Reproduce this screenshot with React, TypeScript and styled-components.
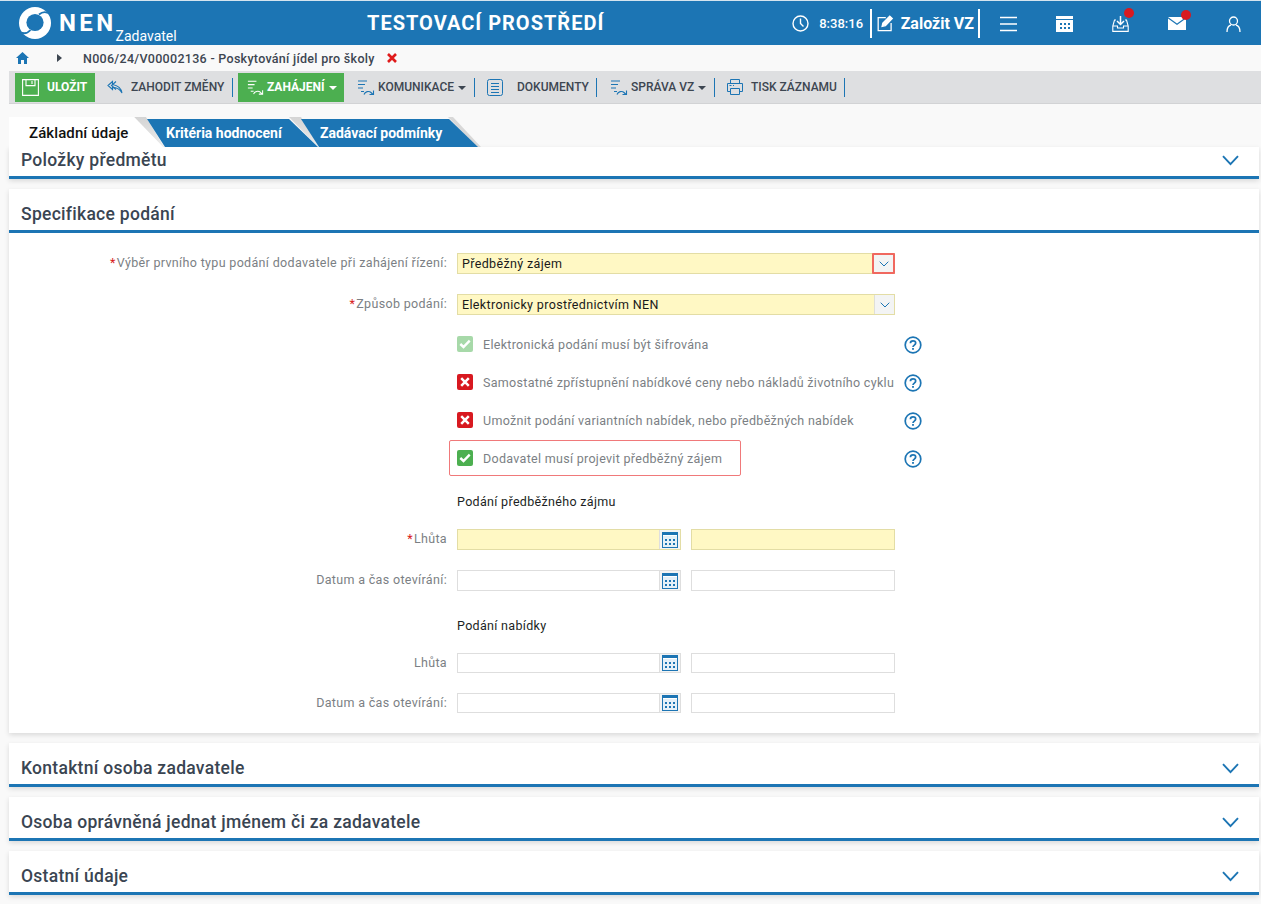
import React from 'react';
import styled, { createGlobalStyle } from 'styled-components';

const Global = createGlobalStyle`
  html, body { margin: 0; padding: 0; background: #f9f9f9; font-family: Roboto, "Liberation Sans", sans-serif; overflow: hidden; }
  * { box-sizing: border-box; }
`;
const Page = styled.div`width: 1261px; height: 904px; overflow: hidden; background: #f9f9f9;`;
const Header = styled.header`
  height: 45px; background: #1c75b4; border-top: 1px solid #d5e4ef; display: flex; align-items: center; color: #fff; position: relative;
`;
const Logo = styled.div`display: flex; align-items: center; width: 340px; padding-left: 18px; height: 44px;`;
const LogoName = styled.span`font-size: 24px; font-weight: 700; letter-spacing: 3.4px; margin-left: 7px; line-height: 1; margin-top: -1px;`;
const LogoSub = styled.span`font-size: 14px; margin-left: -1px; margin-top: 26px;`;
const Title = styled.div`width: 292px; padding-left: 2px; text-align: center; font-size: 20px; font-weight: 700; letter-spacing: 1px;`;
const Clock = styled.div`display: flex; align-items: center; gap: 10px; margin-left: 162px; font-size: 13px; font-weight: 500; width: 77px;`;
const NewButton = styled.div`
  display: flex; align-items: center; gap: 7px; height: 29px; border-left: 2px solid #fff; border-right: 2px solid #fff; margin-left: 1px; padding: 0 4px 0 5px;
  font-size: 16px; font-weight: 700; width: 110px; white-space: nowrap;
`;
const HeaderIcons = styled.div`display: flex; align-items: center; margin-top: 1px;`;
const HeaderIcon = styled.div<{ $w: number }>`width: ${p => p.$w}px; display: flex; justify-content: center; position: relative;`;
const Dot = styled.span`position: absolute; top: -7px; left: 50%; margin-left: 4px; width: 10px; height: 10px; border-radius: 50%; background: #d81920;`;

const Crumbs = styled.div`height: 26px; display: flex; align-items: center; padding-left: 16px; font-size: 12.5px; font-weight: 500; color: #3d4651; letter-spacing: 0.29px;`;
const CrumbArrow = styled.span`margin-left: 28px; margin-right: 21px; width: 0; height: 0; border-left: 5px solid #3d4651; border-top: 4px solid transparent; border-bottom: 4px solid transparent;`;
const CrumbClose = styled.span`margin-left: 12px; display: flex;`;

const Toolbar = styled.div`margin-left: 9px; height: 33px; background: #dedfe1; border-bottom: 1px solid #d2d3d5; display: flex; align-items: center; padding-left: 6px;`;
const Tool = styled.div<{ $green?: boolean; $w: number }>`
  width: ${p => p.$w}px; height: 29px; display: flex; align-items: center; font-size: 12px; flex: none; white-space: nowrap;
  color: ${p => p.$green ? '#fff' : '#3d4651'}; background: ${p => p.$green ? '#4caf50' : 'transparent'};
  font-weight: ${p => p.$green ? 700 : 500};
`;
const ToolGreen = styled(Tool)`margin-left: 5px;`;
const ToolSep = styled.div`width: 1px; height: 19px; flex: none; background: #1c75b4;`;
const ToolIcon = styled.span<{ $l: number; $g: number }>`display: flex; margin-left: ${p => p.$l}px; margin-right: ${p => p.$g}px;`;
const Caret = styled.span`margin-left: 4px; margin-top: 1px; width: 0; height: 0; border-top: 4px solid currentColor; border-left: 4px solid transparent; border-right: 4px solid transparent;`;

const Tabs = styled.div`display: flex; margin: 13px 0 0 9px; height: 30px; align-items: flex-end; position: relative;`;
const ActiveTab = styled.div`
  width: 154px; height: 30px; flex: none; background: #fff; color: #111; font-size: 15px; font-weight: 500; padding: 7px 0 0 20px; letter-spacing: 0.1px;
  clip-path: polygon(0 0, 125px 0, 100% 100%, 0 100%); position: relative; z-index: 2;
`;
const Wedge = styled.div<{ $l: number }>`
  position: absolute; left: ${p => p.$l}px; top: 0; width: 32px; height: 30px; z-index: 1;
  background: linear-gradient(to bottom, #d4d4d4, #ececec);
  clip-path: polygon(0 0, 12px 0, 30px 100%, 29px 100%);
`;
const EndShade = styled.div`
  position: absolute; left: 439px; top: 0; width: 34px; height: 30px; z-index: 1;
  background: #d8d8d8;
  clip-path: polygon(0 0, 5px 0, 33px 100%, 29px 100%);
`;
const Tab = styled.div<{ $w: number; $ml: number; $top: number; $bottom: number }>`
  width: ${p => p.$w}px; height: 28px; background: #1c75b4; color: #fff; font-size: 14px; font-weight: 700; flex: none; position: relative; z-index: 3;
  display: flex; align-items: center; padding-left: 19px; margin-left: ${p => p.$ml}px;
  clip-path: polygon(0 0, ${p => p.$top}px 0, ${p => p.$bottom}px 100%, 18px 100%);
`;
const Stack = styled.main`margin: 0 2px 0 9px; display: flex; flex-direction: column; gap: 10px;`;
const Panel = styled.section`background: #fff; box-shadow: 0 2px 5px rgba(0,0,0,.13);`;
const PanelHead = styled.div<{ $h: number }>`
  height: ${p => p.$h}px; border-bottom: 3px solid #1c75b4; display: flex; align-items: flex-end; justify-content: space-between; padding: 0 20px 4px 12px;
  font-size: 17.5px; font-weight: 500; color: #3a4552; letter-spacing: 0.28px; line-height: 24px;
`;
const Chevron = styled.svg`display: block; margin-bottom: 6px;`;
const Form = styled.div`height: 500px; padding-top: 20px;`;
const Row = styled.div<{ $h: number }>`display: flex; height: ${p => p.$h}px; align-items: flex-start;`;
const Label = styled.div`
  width: 448px; text-align: right; padding: 1px 10px 0 0; font-size: 12.5px; color: #7b7f84; letter-spacing: 0.33px; line-height: 17px; white-space: nowrap;
`;
const Star = styled.span`color: #d81920; margin-right: 1px;`;
const Select = styled.div`
  width: 438px; height: 21px; background: #fff8c4; border: 1px solid #e3dda5; display: flex; font-size: 12.5px; color: #1a1a1a; letter-spacing: 0.35px; position: relative;
`;
const SelectText = styled.div`flex: 1; padding: 1px 4px; line-height: 17px;`;
const SelectBtn = styled.div`width: 20px; background: #f3f4f4; border-left: 1px solid #dfdfd8; display: flex; align-items: center; justify-content: center;`;
const SelectBtnFlagged = styled(SelectBtn)`border: 2px solid #f0685f; border-radius: 1px; width: 23px; height: 21px; margin: -1px -1px -1px 0;`;
const Checks = styled.div`padding-left: 439px; display: flex; flex-direction: column;`;
const CheckRow = styled.div`height: 38px; display: flex; align-items: center; position: relative;`;
const Box = styled.span<{ $c: string }>`
  width: 16px; height: 16px; border-radius: 2px; background: ${p => p.$c}; display: flex; align-items: center; justify-content: center; margin-left: 9px; flex: none;
`;
const CheckText = styled.span`margin-left: 10px; width: 421px; white-space: nowrap; font-size: 12.5px; color: #7b7f84; letter-spacing: 0.3px;`;
const Help = styled.span`display: flex; flex: none; margin-top: 1px;`;
const Outline = styled.div`
  position: absolute; left: 1px; top: 1px; width: 292px; height: 36px; border: 1.5px solid #f0797a; border-radius: 2px; pointer-events: none;
`;
const SubHeading = styled.div<{ $top: number; $h: number }>`
  margin-top: ${p => p.$top}px; height: ${p => p.$h}px; padding-left: 448px; font-size: 12.5px; color: #1c1f24; letter-spacing: 0.32px; line-height: 17px;
`;
const DateBox = styled.div<{ $req?: boolean; $h?: number }>`
  width: 224px; height: ${p => p.$h ?? 21}px; display: flex; border: 1px solid ${p => p.$req ? '#e3dda5' : '#dedede'}; background: ${p => p.$req ? '#fff8c4' : '#fff'};
`;
const DateFill = styled.div`flex: 1;`;
const DateBtn = styled.div`width: 21px; background: #f3f4f4; border-left: 1px solid #dedede; display: flex; align-items: center; justify-content: center;`;
const TimeBox = styled.div<{ $req?: boolean; $h?: number }>`
  width: 204px; height: ${p => p.$h ?? 21}px; margin-left: 10px; border: 1px solid ${p => p.$req ? '#e3dda5' : '#dedede'}; background: ${p => p.$req ? '#fff8c4' : '#fff'};
`;

const B = '#1c75b4';
const Lines = () => (
  <svg width="20" height="20" viewBox="0 0 20 20" fill="none" stroke={B} strokeWidth="1.1">
    <path d="M2 4h9M2 7.5h7M2 11h5M5 14.5h3" />
    <path d="M8 17.5c1-3 5-4 7-2l2 2M17.5 13.5v4h-4" />
  </svg>
);
const LinesW = () => (
  <svg width="19" height="20" viewBox="0 0 20 20" fill="none" stroke="#fff" strokeWidth="1.1">
    <path d="M2 4h9M2 7.5h7M2 11h5M5 14.5h3" />
    <path d="M8 17.5c1-3 5-4 7-2l2 2M17.5 13.5v4h-4" />
  </svg>
);
const Question = () => (
  <svg width="18" height="18" viewBox="0 0 18 18" fill="none">
    <circle cx="9" cy="9" r="7.8" stroke={B} strokeWidth="1.7" />
    <path d="M6.4 7.2c0-1.5 1.2-2.4 2.6-2.4s2.7.9 2.7 2.3c0 2-2.7 2-2.7 3.9" stroke={B} strokeWidth="1.7" />
    <rect x="8.1" y="12" width="1.8" height="1.8" fill={B} />
  </svg>
);
const Tick = () => (
  <svg width="12" height="10" viewBox="0 0 12 10" fill="none"><path d="M1.3 5l3.2 3L10.7 1.6" stroke="#fff" strokeWidth="2.4" /></svg>
);
const Cross = () => (
  <svg width="10" height="10" viewBox="0 0 10 10" fill="none"><path d="M1.2 1.2l7.6 7.6M8.8 1.2L1.2 8.8" stroke="#fff" strokeWidth="2.5" /></svg>
);
const Cal = () => (
  <svg width="16" height="16" viewBox="0 0 16 16" fill="none">
    <rect x=".5" y=".5" width="15" height="15" fill="#e4f0f8" stroke={B} />
    <rect x="0" y="1" width="16" height="2" fill={B} />
    <rect x="1" y="3" width="14" height="1" fill="#fff" />
    <path d="M3 7h2v2H3zM7 7h2v2H7zM11 7h2v2h-2zM3 11h2v2H3zM7 11h2v2H7zM11 11h2v2h-2z" fill={B} />
  </svg>
);
const SmallChev = () => (
  <svg width="10" height="6" viewBox="0 0 10 6" fill="none"><path d="M.7.7L5 5l4.3-4.3" stroke={B} strokeWidth="1" /></svg>
);
const BigChev = () => (
  <Chevron width="17" height="11" viewBox="0 0 17 11" fill="none"><path d="M1 1.2l7.5 8 7.5-8" stroke={B} strokeWidth="1.9" /></Chevron>
);

const Req = ({ children }: { children: React.ReactNode }) => <Label><Star>*</Star>{children}</Label>;

export default function App() {
  return (
    <Page>
      <Global />
      <Header>
        <Logo>
          <svg width="34" height="34" viewBox="0 0 34 34" fill="none">
            <circle cx="17" cy="17" r="16" fill="#fff" />
            <circle cx="17" cy="16.5" r="8.6" fill="#1c75b4" />
            <path d="M21 8.5C24.500 5.500 29 5 34 9.500" stroke="#1c75b4" strokeWidth="1.8" />
            <path d="M12.500 24C9 28 5 28.500 0 25" stroke="#1c75b4" strokeWidth="1.8" />
          </svg>
          <LogoName>NEN</LogoName>
          <LogoSub>Zadavatel</LogoSub>
        </Logo>
        <Title>TESTOVACÍ PROSTŘEDÍ</Title>
        <Clock>
          <svg width="17" height="17" viewBox="0 0 17 17" fill="none" stroke="#fff" strokeWidth="1.4"><circle cx="8.5" cy="8.5" r="7.5" /><path d="M8.5 3.5v5l3 3" /></svg>
          <span>8:38:16</span>
        </Clock>
        <NewButton>
          <svg width="17" height="17" viewBox="0 0 17 17" fill="none" stroke="#fff" strokeWidth="1.3"><path d="M9 2.6H1.2v13.2h13.2V8" /><path d="M6 8l-.8 3.4 3.4-.8 7-7.2-2.6-2.5z" fill="#fff" /></svg>
          Založit VZ
        </NewButton>
        <HeaderIcons>
          <HeaderIcon $w={56}><svg width="17" height="16" viewBox="0 0 17 16" stroke="#fff" strokeWidth="1.5"><path d="M0 1.5h17M0 8h17M0 14.5h17" /></svg></HeaderIcon>
          <HeaderIcon $w={56}><svg width="17" height="16" viewBox="0 0 17 16"><path d="M0 0h17v3H0zM0 4h17v12H0z" fill="#fff" /><path d="M4 7h2v2H4zM8 7h2v2H8zM12 7h2v2h-2zM4 11h2v2H4zM8 11h2v2H8zM12 11h2v2h-2z" fill="#1c75b4" /></svg></HeaderIcon>
          <HeaderIcon $w={56}><svg width="17" height="17" viewBox="0 0 17 17" fill="none" stroke="#fff" strokeWidth="1.1"><path d="M4 5H2.5L.8 11v5.4h15.400V11l-1.700-6H13M.8 11h4.700v2h6v-2h4.700" /><path d="M8.500 1v8M5 6l3.500 3.500L12 6" strokeWidth="1.5" /></svg><Dot /></HeaderIcon>
          <HeaderIcon $w={58}><svg width="18" height="13" viewBox="0 0 18 13"><path d="M0 0h18L9 6.5z" fill="#fff" /><path d="M0 1.5l9 6.5 9-6.5V13H0z" fill="#fff" /></svg><Dot /></HeaderIcon>
          <HeaderIcon $w={55}><svg width="15" height="16" viewBox="0 0 15 16" fill="none" stroke="#fff" strokeWidth="1.3"><circle cx="7.5" cy="5" r="4" /><path d="M1 16c0-4 2-6.5 4-7M14 16c0-4-2-6.5-4-7" /></svg></HeaderIcon>
        </HeaderIcons>
      </Header>
      <Crumbs>
        <svg width="13" height="12" viewBox="0 0 13 12"><path d="M6.5 0L13 6h-2v6H8V8H5v4H2V6H0z" fill={B} /></svg>
        <CrumbArrow />
        N006/24/V00002136 - Poskytování jídel pro školy
        <CrumbClose><svg width="10" height="10" viewBox="0 0 10 10"><path d="M1 1l8 8M9 1l-8 8" stroke="#e01b1b" strokeWidth="2.6" /></svg></CrumbClose>
      </Crumbs>
      <Toolbar>
        <Tool $green $w={80}>
          <ToolIcon $l={7} $g={8}><svg width="17" height="17" viewBox="0 0 17 17" fill="none" stroke="#fff" strokeWidth="1.1"><path d="M.6.6h15.800v15.800H.6zM4 .6v6h9v-6M10 2v3" /></svg></ToolIcon>
          ULOŽIT
        </Tool>
        <Tool $w={137}>
          <ToolIcon $l={12} $g={8}><svg width="16" height="14" viewBox="0 0 16 14" fill="none" stroke={B} strokeWidth="1.1"><path d="M9 1.5L4.5 5.5 9 9.5" /><path d="M5.5 1.5L1 5.5l4.5 4V7.500c4.500 0 7.500 1.500 9.500 5.500-.8-5-4-7.500-9.500-8.500z" /></svg></ToolIcon>
          ZAHODIT ZMĚNY
        </Tool>
        <ToolSep />
        <ToolGreen $green $w={106}>
          <ToolIcon $l={8} $g={2}><LinesW /></ToolIcon>
          ZAHÁJENÍ<Caret />
        </ToolGreen>
        <Tool $w={130}>
          <ToolIcon $l={12} $g={2}><Lines /></ToolIcon>
          KOMUNIKACE<Caret />
        </Tool>
        <ToolSep />
        <Tool $w={121}>
          <ToolIcon $l={12} $g={14}><svg width="16" height="17" viewBox="0 0 16 17" fill="none" stroke={B} strokeWidth="1"><rect x=".5" y=".5" width="15" height="16" rx="2" /><path d="M4 4.5h8M4 7.5h8M4 10.5h8M4 13.5h8" /></svg></ToolIcon>
          DOKUMENTY
        </Tool>
        <ToolSep />
        <Tool $w={117}>
          <ToolIcon $l={12} $g={2}><Lines /></ToolIcon>
          SPRÁVA VZ<Caret />
        </Tool>
        <ToolSep />
        <Tool $w={129}>
          <ToolIcon $l={12} $g={8}><svg width="16" height="16" viewBox="0 0 16 16" fill="none" stroke={B} strokeWidth="1"><path d="M3.5 4.5V.5h9v4M3.5 12.5H.5v-8h15v8h-3M3.5 9.5h9v6h-9zM2.5 6.5h2M6 6.5h1" /></svg></ToolIcon>
          TISK ZÁZNAMU
        </Tool>
        <ToolSep />
      </Toolbar>
      <Tabs>
        <Wedge $l={125} />
        <Wedge $l={280} />
        <EndShade />
        <ActiveTab>Základní údaje</ActiveTab>
        <Tab $w={172} $ml={-16} $top={142} $bottom={171}>Kritéria hodnocení</Tab>
        <Tab $w={177} $ml={-18} $top={148} $bottom={177}>Zadávací podmínky</Tab>
      </Tabs>
      <Stack>
        <Panel><PanelHead $h={32}>Položky předmětu<BigChev /></PanelHead></Panel>
        <Panel>
          <PanelHead $h={44}>Specifikace podání</PanelHead>
          <Form>
            <Row $h={41}>
              <Req>Výběr prvního typu podání dodavatele při zahájení řízení:</Req>
              <Select><SelectText>Předběžný zájem</SelectText><SelectBtnFlagged><SmallChev /></SelectBtnFlagged></Select>
            </Row>
            <Row $h={31}>
              <Req>Způsob podání:</Req>
              <Select><SelectText>Elektronicky prostřednictvím NEN</SelectText><SelectBtn><SmallChev /></SelectBtn></Select>
            </Row>
            <Checks>
              <CheckRow><Box $c="#a7d9a9"><Tick /></Box><CheckText>Elektronická podání musí být šifrována</CheckText><Help><Question /></Help></CheckRow>
              <CheckRow><Box $c="#d81920"><Cross /></Box><CheckText>Samostatné zpřístupnění nabídkové ceny nebo nákladů životního cyklu</CheckText><Help><Question /></Help></CheckRow>
              <CheckRow><Box $c="#d81920"><Cross /></Box><CheckText>Umožnit podání variantních nabídek, nebo předběžných nabídek</CheckText><Help><Question /></Help></CheckRow>
              <CheckRow><Outline /><Box $c="#4caf50"><Tick /></Box><CheckText>Dodavatel musí projevit předběžný zájem</CheckText><Help><Question /></Help></CheckRow>
            </Checks>
            <SubHeading $top={16} $h={36}>Podání předběžného zájmu</SubHeading>
            <Row $h={41}><Req>Lhůta</Req><DateBox $req><DateFill /><DateBtn><Cal /></DateBtn></DateBox><TimeBox $req /></Row>
            <Row $h={47}><Label>Datum a čas otevírání:</Label><DateBox><DateFill /><DateBtn><Cal /></DateBtn></DateBox><TimeBox /></Row>
            <SubHeading $top={0} $h={36}>Podání nabídky</SubHeading>
            <Row $h={40}><Label>Lhůta</Label><DateBox $h={20}><DateFill /><DateBtn><Cal /></DateBtn></DateBox><TimeBox $h={20} /></Row>
            <Row $h={30}><Label>Datum a čas otevírání:</Label><DateBox $h={20}><DateFill /><DateBtn><Cal /></DateBtn></DateBox><TimeBox $h={20} /></Row>
          </Form>
        </Panel>
        <Panel><PanelHead $h={44}>Kontaktní osoba zadavatele<BigChev /></PanelHead></Panel>
        <Panel><PanelHead $h={44}>Osoba oprávněná jednat jménem či za zadavatele<BigChev /></PanelHead></Panel>
        <Panel><PanelHead $h={44}>Ostatní údaje<BigChev /></PanelHead></Panel>
      </Stack>
    </Page>
  );
}
